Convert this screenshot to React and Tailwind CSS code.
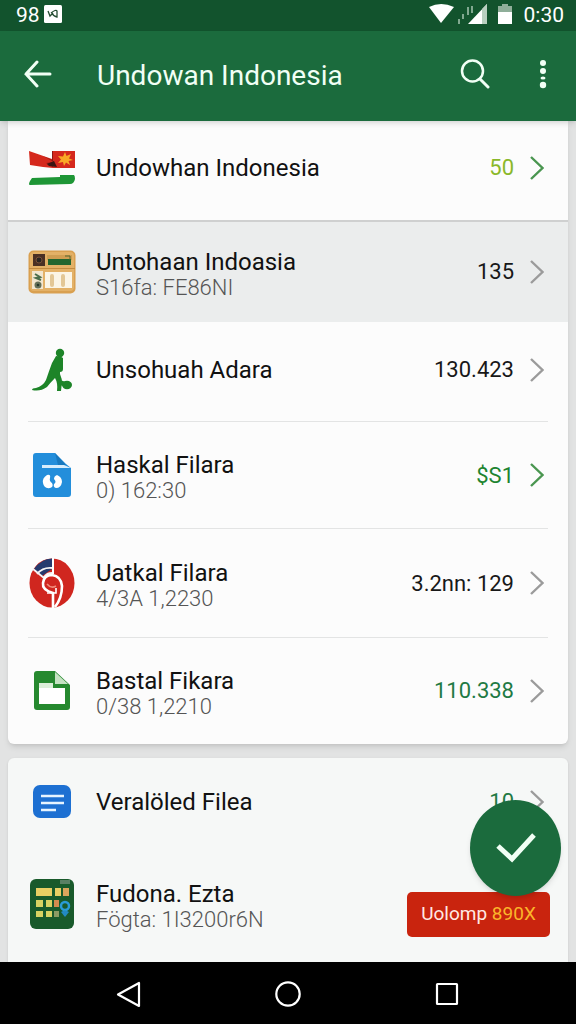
import { clsx } from 'clsx';

const FlagIcon = () => (
  <svg viewBox="0 0 46 36" className="h-9 w-[46px]">
    <path d="M0 1 L23 9 V1 H46 V18 H24 L14 17 L1 15Z" fill="#d5281c" />
    <path d="M14 6 L23 10 V1 H24 V17 L17 13 L25 12Z" fill="#8e1712" />
    <path d="M18 14 L25 11 L28 17 L20 16Z" fill="#3a1512" />
    <path d="M36 2 L37.500 6 L42 4 L40 8.500 L44 10 L39.500 11 L41 15 L37 12.500 L35 16 L34 12 L29 13 L32 9.500 L29 6 L34 6.500Z" fill="#f9a825" />
    <path d="M3 28 L31 27 V25 H45 Q46 26 46 29 Q45 34 41 34 L1 35 Q-1 35 1 31Z" fill="#1e9636" />
  </svg>
);

const BoxIcon = () => (
  <svg viewBox="0 0 48 44" className="h-11 w-12">
    <rect x="0.500" y="0.500" width="47" height="43" rx="5" fill="#d9a050" />
    <rect x="2" y="2" width="44" height="39" rx="4" fill="#e3b167" />
    <rect x="5" y="4" width="12" height="12" fill="#4a3024" />
    <circle cx="11" cy="10" r="3" fill="#2a2422" stroke="#785138" />
    <rect x="19" y="5" width="25" height="5" fill="#cf9e52" />
    <rect x="20" y="9" width="23" height="6" fill="#22662f" />
    <path d="M37 6 L42 6 V10" fill="none" stroke="#52652f" />
    <path d="M1 18.500 H47" stroke="#c38b40" />
    <rect x="4" y="21" width="11" height="18" fill="#f2e6cf" />
    <rect x="17" y="22" width="27" height="16" fill="#fbf5e6" />
    <path d="M7 24 L12 27 L8 28 L13 30" fill="none" stroke="#4b6d4b" strokeWidth="2" />
    <circle cx="10" cy="35" r="3.500" fill="#657058" />
    <circle cx="10" cy="35" r="1.300" fill="#26372a" />
    <path d="M24 26 V35 M35 26 V35" stroke="#e3c795" strokeWidth="4" strokeLinecap="round" />
  </svg>
);

const RunnerIcon = () => (
  <svg viewBox="0 0 40 44" className="h-11 w-10" fill="#1d8428">
    <circle cx="28" cy="5" r="4.200" />
    <path d="M24 8 Q29 8 31 10 V21 Q31 24 28 24 L28 26 Q30 31 30 34 L29 43 H25 Q26 35 23 30 Q18 35 15 39 Q8 44 0 42 Q0 40 4 40 Q11 38 14 32 Q17 23 20 15Z" />
    <ellipse cx="35" cy="37" rx="5" ry="4.200" />
    <path d="M28 32 L34 34 V39 L28 37Z" />
  </svg>
);

const BlueFileIcon = () => (
  <svg viewBox="0 0 38 44" className="h-11 w-[38px]">
    <path d="M3 0 H22 L33 11 L38 15 V41 Q38 44 35 44 H3 Q0 44 0 41 V3 Q0 0 3 0Z" fill="#238edb" />
    <path d="M22 0 L33 12 H25Z" fill="#1879bf" />
    <path d="M9 12 H31 L38 15 H9Z" fill="#d7edfc" />
    <path d="M14 22 Q18 21 17 25 Q16 28 19 30 Q21 34 17 35 Q11 36 10 30 Q9 25 14 22Z M24 22 Q29 24 29 29 Q28 35 23 35 Q20 34 21 31 Q24 29 21 26 Q21 23 24 22Z" fill="#fff" />
  </svg>
);

const EmblemIcon = () => (
  <svg viewBox="0 0 46 50" className="h-[50px] w-[46px]">
    <ellipse cx="23" cy="25" rx="22.500" ry="24.500" fill="#d0261f" />
    <path d="M5 11 Q12 1 23 .5 V11 L13 18Z" fill="#263a6e" />
    <path d="M4 11 L15 20 M8 16 Q14 9 23 10 M15 19 Q18 15 23 15" fill="none" stroke="#f6f3f4" strokeWidth="1.800" />
    <path d="M24 0 V16" stroke="#fff" strokeWidth="2" />
    <path d="M24 50 V35 Q13 32 14 25 Q15 17 23 17 Q32 18 33 28 Q33 40 26 49" fill="none" stroke="#fff" strokeWidth="2.600" />
    <path d="M18 26 Q22 31 27 28" fill="none" stroke="#f08a78" strokeWidth="1.600" />
    <path d="M18 35 H27 V30" fill="none" stroke="#fff" strokeWidth="1.600" />
  </svg>
);

const GreenFileIcon = () => (
  <svg viewBox="0 0 36 39" className="h-[39px] w-9">
    <path d="M3 0 H21 L36 14 V36 Q36 39 33 39 H3 Q0 39 0 36 V3 Q0 0 3 0Z" fill="#26892f" />
    <path d="M21 1 L34 13 H21Z" fill="#c5e2c2" />
    <path d="M5 12 H19 V17 H31 V33 H5Z" fill="#fff" />
    <path d="M5 12 H19 V17 H5Z" fill="#dcefd9" />
  </svg>
);

const NoteIcon = () => (
  <svg viewBox="0 0 38 33" className="h-[33px] w-[38px]">
    <rect width="38" height="33" rx="7" fill="#1d70d2" />
    <path d="M8 11 H31 M8 18 H31 M8 25 H23" stroke="#e6f4ff" strokeWidth="2.600" />
  </svg>
);

const CalculatorIcon = () => (
  <svg viewBox="0 0 44 50" className="h-[50px] w-11">
    <rect width="44" height="50" rx="6" fill="#195a2b" />
    <path d="M30 1 H40 V5 H30Z" fill="#5a8064" />
    <path d="M6 9 H22 V17 H6Z M25 9 H31 V17 H25Z" fill="#e9cf63" />
    <path d="M33 9 H39 V17 H33Z" fill="#dca55c" />
    <path d="M6 21 H13 V28 H6Z M16 21 H22 V28 H16Z M6 32 H13 V38 H6Z M16 32 H22 V38 H16Z" fill="#d9d262" />
    <path d="M24 21 H29 V28 H24Z" fill="#d58b4e" />
    <path d="M24 32 H29 V38 H24Z" fill="#8c9b63" />
    <circle cx="35" cy="27" r="4" fill="none" stroke="#299bd6" strokeWidth="2.500" />
    <path d="M31 33 Q35 30 39 33 L35 38Z" fill="#2389c2" />
  </svg>
);

const Chevron = ({ className }) => (
  <svg viewBox="0 0 14 24" className={clsx('h-6 w-[14px] shrink-0', className)} fill="none" stroke="currentColor" strokeWidth="2.400">
    <path d="M1 1 L12.500 12 L1 23" />
  </svg>
);

const files = [
  { title: 'Undowhan Indonesia', amount: '50', icon: FlagIcon, color: 'text-[#8ab82a]', chevron: 'text-[#4a9650]', row: 'h-25 pb-1.5' },
  { title: 'Untohaan Indoasia', sub: 'S16fa: FE86NI', amount: '135', icon: BoxIcon, row: 'h-25', selected: true },
  { title: 'Unsohuah Adara', amount: '130.423', icon: RunnerIcon, row: 'h-25 pb-1' },
  { title: 'Haskal Filara', sub: '0) 162:30', amount: '$S1', icon: BlueFileIcon, color: 'text-[#1d8430]', chevron: 'text-[#4a9650]', row: 'h-[107px]' },
  { title: 'Uatkal Filara', sub: '4/3A 1,2230', amount: '3.2nn: 129', icon: EmblemIcon, row: 'h-[109px]' },
  { title: 'Bastal Fikara', sub: '0/38 1,2210', amount: '110.338', icon: GreenFileIcon, color: 'text-[#1f7a44]', row: 'h-[106px]' },
];

const RowText = ({ icon: Icon, title, sub }) => (
  <>
    <span className="flex w-12 shrink-0 justify-center">
      <Icon />
    </span>
    <span className={clsx('ml-5 min-w-0 flex-1', sub && 'pt-1.5')}>
      <span className="block text-2xl leading-[26px] text-[#111]">{title}</span>
      {sub && <span className="block text-[22px] leading-[26px] font-light text-[#555]">{sub}</span>}
    </span>
  </>
);

const FileRow = ({ amount, color, chevron, row, selected, last, ...text }) => (
  <li className={clsx(selected && '-mt-px border-t-2 border-[#cfd0d0] bg-[#ebeded]')}>
    <a
      href="#"
      className={clsx('mx-5 flex items-center border-b pr-1', row, selected || last ? 'border-transparent' : 'border-[#e3e4e4]')}
    >
      <RowText {...text} />
      <span className={clsx('mr-4 text-[22px]', color ?? 'text-[#181818]')}>{amount}</span>
      <Chevron className={chevron ?? 'text-[#9b9b9b]'} />
    </a>
  </li>
);

const StatusBar = () => (
  <div className="flex h-[31px] items-center bg-[#12532d] px-4 pb-1 text-white">
    <span className="pt-1 text-[21px]">98</span>
    <svg viewBox="0 0 18 18" className="ml-1 h-[18px] w-[18px]">
      <rect width="18" height="18" rx="1.500" fill="#fff" />
      <path d="M4 6 L6 11 L9 8 M7 8 Q12 4 13 6 V12 Q9 11 8 8" fill="none" stroke="#244c32" strokeWidth="1.300" />
    </svg>
    <svg viewBox="0 0 86 22" className="ml-auto h-[22px] w-[86px]" fill="#fff">
      <path d="M1 4 Q13 -2 26 4 L13 20Z" />
      <path d="M40 21 L59 1 V21Z" />
      <path d="M54 6 L59 1 V21 H54Z" fill="#b9cfc0" />
      <path d="M31 16 V21 M35 11 V16 M40 4 V12 M44 3 V10" stroke="#a7c5b1" strokeWidth="1.500" />
      <path d="M70 3 H74 V1 H80 V3 H84 V9 H70Z" fill="#8fae99" />
      <path d="M70 9 H84 V21 H70Z" />
    </svg>
    <span className="-mr-1 ml-2.5 pt-1 text-[21px]">0:30</span>
  </div>
);

const AppBar = () => (
  <header className="relative flex h-[90px] items-center bg-[#1b6b3d] pr-4 pb-1 pl-6 text-[#f1fff5] shadow-md">
    <button aria-label="Back">
      <svg viewBox="0 0 28 28" className="h-7 w-7" fill="none" stroke="currentColor" strokeWidth="3" strokeLinecap="round">
        <path d="M13 2 L2 14 L13 26 M2 14 H26" />
      </svg>
    </button>
    <h1 className="ml-[45px] flex-1 pt-1 text-[28px]">Undowan Indonesia</h1>
    <button aria-label="Search">
      <svg viewBox="0 0 30 30" className="mr-1 h-[30px] w-[30px]" fill="none" stroke="currentColor" strokeWidth="2.500" strokeLinecap="round">
        <circle cx="12.500" cy="12" r="10.500" />
        <path d="M20 20 L28 28" strokeWidth="3" />
      </svg>
    </button>
    <button aria-label="More options" className="ml-8">
      <svg viewBox="0 0 34 30" className="h-[30px] w-[34px]" fill="currentColor">
        <circle cx="17" cy="4" r="3" />
        <circle cx="17" cy="12" r="3" />
        <ellipse cx="17" cy="19" rx="2.500" ry="1.500" />
        <circle cx="17" cy="26" r="3.200" />
      </svg>
    </button>
  </header>
);

const NavBar = () => (
  <nav className="flex h-[62px] items-center justify-between bg-black px-[116px] pt-px text-white">
    <button aria-label="Back">
      <svg viewBox="0 0 26 28" className="h-7 w-[26px]" fill="none" stroke="currentColor" strokeWidth="2.200" strokeLinejoin="round">
        <path d="M23 3 V26 L2 14.500Z" />
      </svg>
    </button>
    <button aria-label="Home">
      <svg viewBox="0 0 28 28" className="h-7 w-7" fill="none" stroke="currentColor" strokeWidth="2.200">
        <circle cx="14" cy="14" r="11.700" />
      </svg>
    </button>
    <button aria-label="Recent apps">
      <svg viewBox="0 0 26 26" className="h-[26px] w-[26px]" fill="none" stroke="currentColor" strokeWidth="2.200">
        <rect x="3" y="3" width="20" height="20" rx="0.500" />
      </svg>
    </button>
  </nav>
);

const App = () => {
  return (
    <div className="relative flex min-h-screen flex-col bg-[#e2e3e3] font-[Roboto,sans-serif]">
      <StatusBar />
      <AppBar />

      <main className="flex flex-1 flex-col gap-3.5 px-2">
        <ul className="overflow-hidden rounded-b-md bg-[#fcfcfc] shadow-md">
          {files.map((file, i) => (
            <FileRow key={file.title} {...file} last={i === files.length - 1} />
          ))}
        </ul>

        <ul className="flex-1 rounded-t-md bg-[#f6f8f7] shadow-sm">
          <FileRow
            title="Veralöled Filea"
            amount="10"
            icon={NoteIcon}
            color="text-[#1f7a44]"
            row="h-[88px]"
            last
          />
          <li className="mx-5 flex h-[116px] items-center">
            <RowText icon={CalculatorIcon} title="Fudona. Ezta" sub="Fögta: 1I3200r6N" />
            <button className="-mr-0.5 mt-5 h-[45px] w-[143px] rounded-[5px] bg-[#c9240e] text-[19px] text-[#ffe9e3]">
              Uolomp <span className="text-[#fbb52a]">890X</span>
            </button>
          </li>
        </ul>
      </main>

      {/* Floating confirm button */}
      <button
        aria-label="Confirm"
        className="absolute right-[15px] bottom-32 flex h-24 w-[91px] items-center justify-center rounded-[50%] bg-[#1b6b3d] shadow-md"
      >
        <svg viewBox="0 0 40 30" className="h-[30px] w-10" fill="none" stroke="#f1fff5" strokeWidth="5">
          <path d="M2 13 L16 26 L38 2" />
        </svg>
      </button>

      <NavBar />
    </div>
  );
};

export default App;
